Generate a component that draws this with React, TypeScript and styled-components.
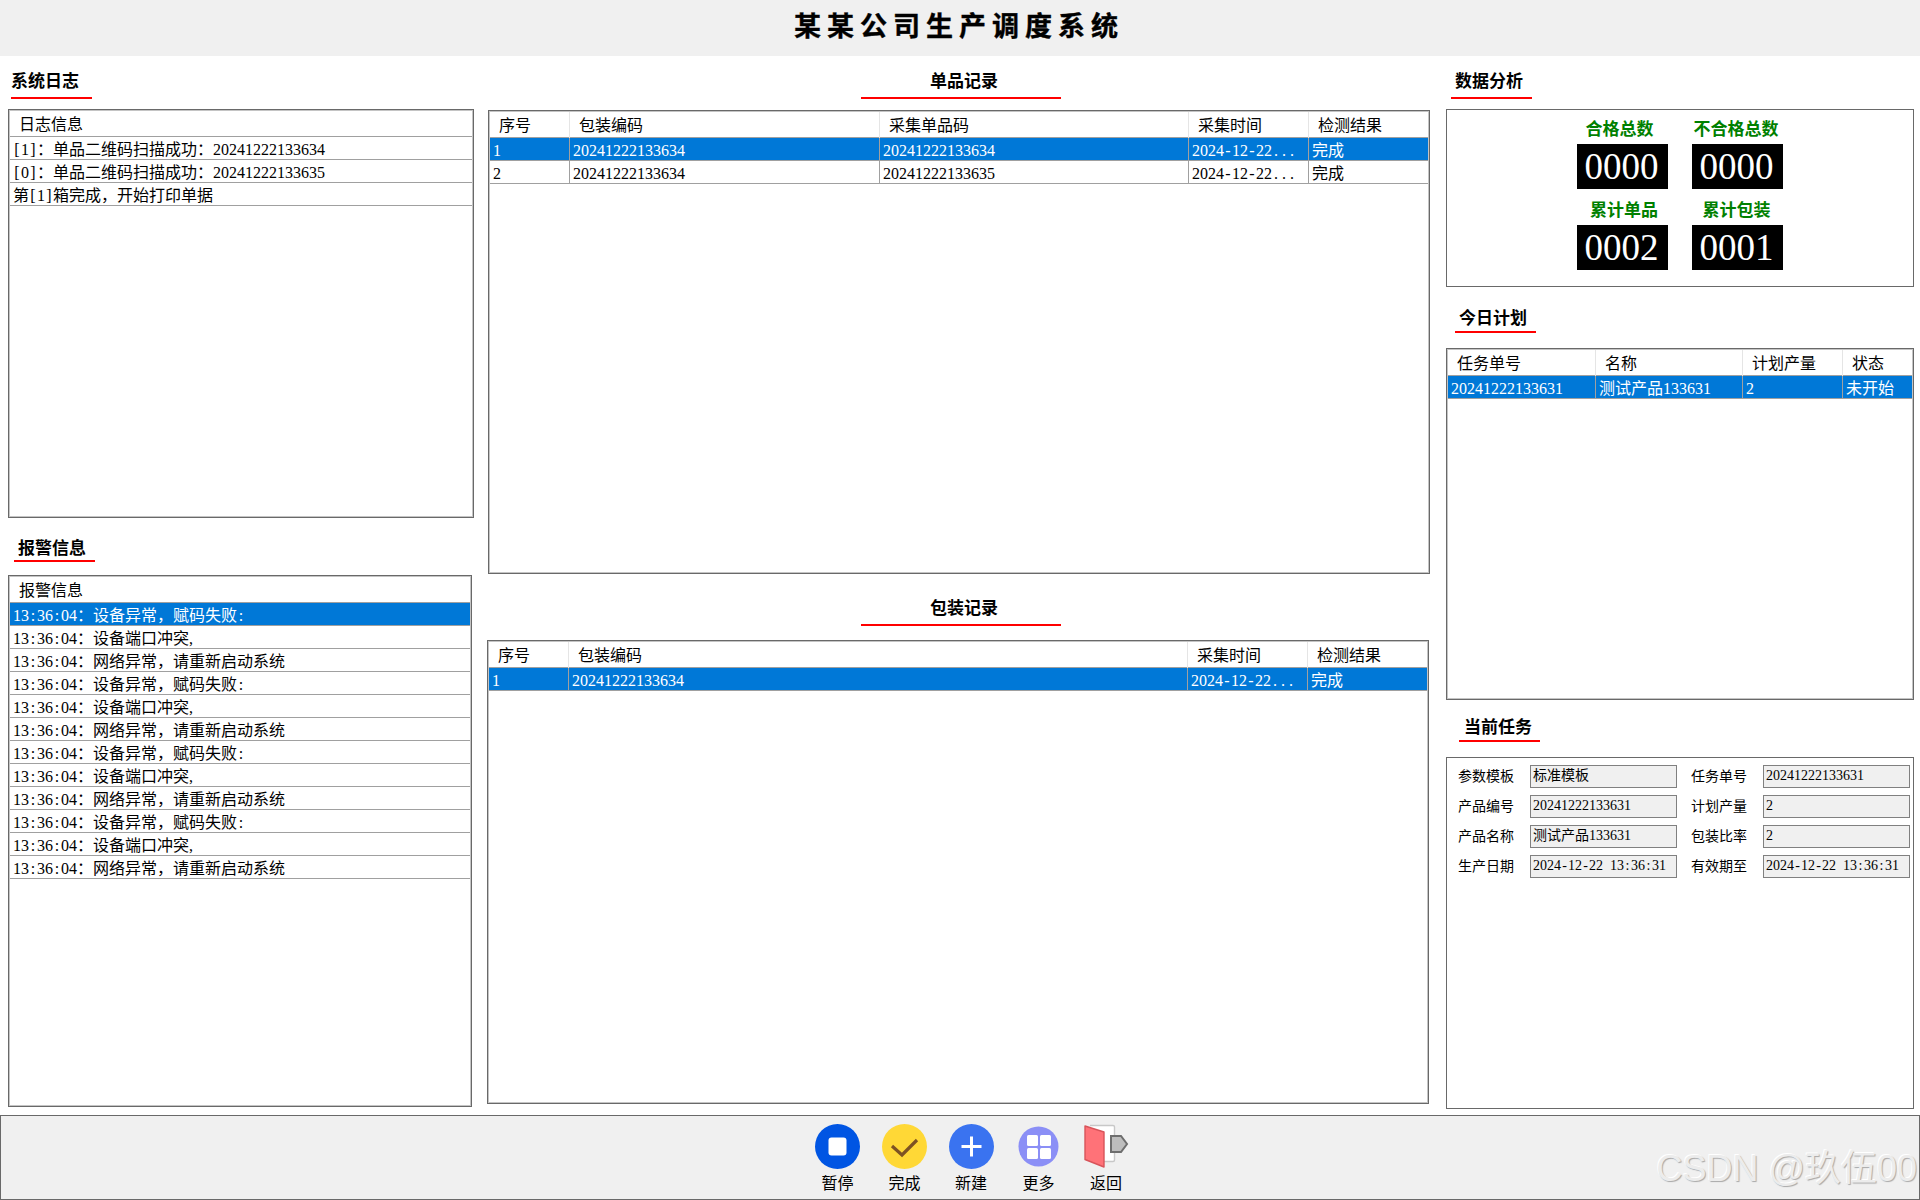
import React from "react";
import { createGlobalStyle, styled } from "styled-components";

const SONG = `"Liberation Serif", "Noto Sans CJK SC", serif`;

const GlobalStyle = createGlobalStyle`
  html, body {
    margin: 0;
    padding: 0;
    background: #fff;
  }
  body {
    font-family: ${SONG};
    font-size: 16px;
    color: #000;
  }
  * {
    box-sizing: border-box;
  }
`;

// half-width punctuation, the serif font has them narrower than the picture
const Half = styled.span`
  display: inline-block;
  width: 0.5em;
  text-align: center;
`;

const fixed = (text: string) =>
  text.split(/([:\[\]\-. ])/).map((part, i) =>
    i % 2 ? <Half key={i}>{part}</Half> : part
  );

const Page = styled.div`
  width: 1920px;
  height: 1200px;
  display: flex;
  flex-direction: column;
  overflow: hidden;
`;

const TopBar = styled.header`
  height: 56px;
  flex: none;
  background: #f0f0f0;
  display: flex;
  align-items: center;
  justify-content: center;
  padding: 0 2px 7px 0;
`;

const AppTitle = styled.h1`
  margin: 0;
  font-size: 27px;
  font-weight: 700;
  letter-spacing: 6px;
  font-family: "Noto Sans CJK SC", sans-serif;
  -webkit-text-stroke: 0.4px #000;
`;

const Main = styled.main`
  flex: 1;
  display: flex;
  padding: 0 6px 0 8px;
`;

const Column = styled.section<{ $w: number; $mx?: string }>`
  width: ${(p) => p.$w}px;
  flex: none;
  margin: ${(p) => p.$mx || "0"};
  display: flex;
  flex-direction: column;
`;

const Head = styled.div<{ $h: number; $below: number; $x?: number }>`
  height: ${(p) => p.$h}px;
  flex: none;
  display: flex;
  align-items: flex-end;
  padding-bottom: ${(p) => p.$below}px;
  padding-left: ${(p) => p.$x || 0}px;
`;

const HeadLabel = styled.div<{ $w?: number; $pad?: number; $lift?: number; $center?: boolean }>`
  width: ${(p) => p.$w || 81}px;
  padding-left: ${(p) => p.$pad || 0}px;
  padding-bottom: ${(p) => p.$lift ?? 5}px;
  text-align: ${(p) => (p.$center ? "center" : "left")};
  line-height: 24px;
  font-size: 17px;
  font-weight: 700;
  white-space: nowrap;
  border-bottom: 2px solid #f00;
  font-family: "Noto Sans CJK SC", sans-serif;
`;

const Panel = styled.div<{ $h: number; $mr?: number; $ml?: number }>`
  height: ${(p) => p.$h}px;
  flex: none;
  margin-left: ${(p) => p.$ml || 0}px;
  margin-right: ${(p) => p.$mr || 0}px;
  border: 1px solid #696969;
  padding: 1px;
  background: #fff;
`;

const GridPanel = styled(Panel)`
  box-shadow: inset 0 0 0 1px #c4c4c4;
`;

const HeaderRow = styled.div<{ $cols: string }>`
  display: grid;
  grid-template-columns: ${(p) => p.$cols};
  height: 26px;
  border-bottom: 1px solid #a0a0a0;
  background: #fff;
`;

const HeaderCell = styled.div`
  padding-left: 9px;
  line-height: 27px;
  white-space: nowrap;
  border-right: 1px solid #e5e5e5;
  &:last-child {
    border-right: none;
  }
`;

const Row = styled.div<{ $cols: string; $active?: boolean }>`
  display: grid;
  grid-template-columns: ${(p) => p.$cols};
  height: 23px;
  border-bottom: 1px solid #a0a0a0;
  background: ${(p) => (p.$active ? "#0078d7" : "#fff")};
  color: ${(p) => (p.$active ? "#fff" : "#000")};
`;

const Cell = styled.div`
  padding-left: 3px;
  line-height: 25px;
  white-space: nowrap;
  overflow: hidden;
  border-right: 1px solid #a0a0a0;
  &:last-child {
    border-right: none;
  }
`;

const BareCell = styled(Cell)`
  border-right: none;
`;

interface DataGridProps {
  cols: string;
  headers: string[];
  rows: string[][];
  activeRow?: number;
}

const DataGrid: React.FC<DataGridProps> = (props) => {
  return (
    <>
      <HeaderRow $cols={props.cols}>
        {props.headers.map((h) => (
          <HeaderCell key={h}>{h}</HeaderCell>
        ))}
      </HeaderRow>
      {props.rows.map((row, i) => (
        <Row key={i} $cols={props.cols} $active={i === props.activeRow}>
          {row.map((c, j) =>
            row.length === 1 ? (
              <BareCell key={j}>{fixed(c)}</BareCell>
            ) : (
              <Cell key={j}>{fixed(c)}</Cell>
            )
          )}
        </Row>
      ))}
    </>
  );
};

const StatGrid = styled.div`
  display: grid;
  grid-template-columns: 91px 91px;
  justify-content: center;
  column-gap: 24px;
  row-gap: 8px;
  padding-top: 5px;
`;

const StatLabel = styled.div<{ $shift?: number }>`
  height: 24px;
  line-height: 24px;
  margin-bottom: 4px;
  font-size: 17px;
  font-weight: 700;
  color: #008000;
  text-align: center;
  white-space: nowrap;
  font-family: "Noto Sans CJK SC", sans-serif;
  padding-left: ${(p) => Math.max(p.$shift || 0, 0)}px;
  padding-right: ${(p) => Math.max(-(p.$shift || 0), 0)}px;
`;

const StatValue = styled.div`
  height: 45px;
  background: #000;
  color: #fff;
  font-family: "Liberation Serif", serif;
  font-size: 37px;
  line-height: 45px;
  text-align: center;
  padding-right: 2px;
`;

const FormGrid = styled.div`
  display: grid;
  grid-template-columns: 219px 219px;
  column-gap: 14px;
  row-gap: 7px;
  padding: 6px 0 0 10px;
`;

const Field = styled.div`
  display: grid;
  grid-template-columns: 72px 147px;
  font-size: 14px;
`;

const FieldLabel = styled.div`
  height: 23px;
  line-height: 24px;
  white-space: nowrap;
`;

const FieldValue = styled.div`
  height: 23px;
  border: 1px solid #808080;
  background: #f0f0f0;
  padding-left: 2px;
  line-height: 19px;
  white-space: nowrap;
  overflow: hidden;
`;

const BottomBar = styled.footer`
  position: relative;
  height: 85px;
  flex: none;
  background: #f0f0f0;
  border: 1px solid #696969;
  display: flex;
  justify-content: center;
  padding: 8px 0 0 23px;
`;

const ToolButton = styled.button<{ $w: number }>`
  width: ${(p) => p.$w}px;
  padding: 0;
  border: none;
  background: none;
  font-family: ${SONG};
  font-size: 16px;
  color: #000;
  display: flex;
  flex-direction: column;
  align-items: center;
  justify-content: flex-start;
  gap: 5px;
`;

const ToolIcon = styled.svg`
  display: block;
  flex: none;
  width: 45px;
  height: 45px;
`;

const ToolText = styled.span`
  line-height: 20px;
`;

const Watermark = styled.div`
  position: absolute;
  right: 2px;
  bottom: 8px;
  font-family: "Liberation Sans", "Noto Sans CJK SC", sans-serif;
  font-size: 36px;
  line-height: 44px;
  white-space: nowrap;
  color: #ececec;
  text-shadow: 1px 1px 1px #a8a8a8, -1px -1px 0 #fff;
`;

const StopIcon = () => (
  <ToolIcon viewBox="0 0 45 45">
    <circle cx="22.5" cy="22.5" r="22.5" fill="#0055e3" />
    <rect x="13.5" y="13.5" width="18" height="18" rx="3" fill="#fff" />
  </ToolIcon>
);

const DoneIcon = () => (
  <ToolIcon viewBox="0 0 45 45">
    <circle cx="22.5" cy="22.5" r="22.5" fill="#ffd836" />
    <path d="M10 22 L20 31 L35 16" fill="none" stroke="#7d5223" strokeWidth="3.2" />
  </ToolIcon>
);

const NewIcon = () => (
  <ToolIcon viewBox="0 0 45 45">
    <circle cx="22.5" cy="22.5" r="22.5" fill="#3a73f0" />
    <path d="M12.5 22.5 H32.5 M22.5 12.5 V32.5" stroke="#fff" strokeWidth="3" />
  </ToolIcon>
);

const MoreIcon = () => (
  <ToolIcon viewBox="0 0 45 45">
    <circle cx="22.5" cy="22.5" r="20" fill="#8b8ff6" />
    <rect x="11" y="11" width="11" height="11" rx="1.5" fill="#fff" />
    <rect x="24" y="11" width="11" height="11" rx="1.5" fill="#fff" />
    <rect x="11" y="24" width="11" height="11" rx="1.5" fill="#fff" />
    <rect x="24" y="24" width="11" height="11" rx="1.5" fill="#fff" />
  </ToolIcon>
);

const BackIcon = () => (
  <ToolIcon viewBox="0 0 45 45">
    <path d="M6 1.5 H29 Q30.5 1.5 30.5 3 V36 Q30.5 37.5 29 37.5 H20" fill="#fff" stroke="#c8c8c8" strokeWidth="1.4" />
    <path d="M1 2 L20 8 V43 L1 35.5 Z" fill="#ff7278" stroke="#d8545a" strokeWidth="1.4" strokeLinejoin="round" />
    <path d="M27 12 H37 L43 20 L37 28 H27 Z" fill="#bdbdbd" stroke="#6e6e6e" strokeWidth="2" />
  </ToolIcon>
);

const logRows = [
  ["[1]：单品二维码扫描成功：20241222133634"],
  ["[0]：单品二维码扫描成功：20241222133635"],
  ["第[1]箱完成，开始打印单据"],
];

const alarmTexts = [
  "设备异常，赋码失败:",
  "设备端口冲突,",
  "网络异常，请重新启动系统",
];
const alarmRows = Array.from({ length: 12 }, (_, i) => [
  `13:36:04：${alarmTexts[i % 3]}`,
]);

const itemRows = [
  ["1", "20241222133634", "20241222133634", "2024-12-22...", "完成"],
  ["2", "20241222133634", "20241222133635", "2024-12-22...", "完成"],
];

const packRows = [["1", "20241222133634", "2024-12-22...", "完成"]];

const planRows = [["20241222133631", "测试产品133631", "2", "未开始"]];

const stats = [
  { label: "合格总数", value: "0000", shift: -6 },
  { label: "不合格总数", value: "0000", shift: -3 },
  { label: "累计单品", value: "0002", shift: 3 },
  { label: "累计包装", value: "0001", shift: -2 },
];

const fields = [
  ["参数模板", "标准模板"],
  ["任务单号", "20241222133631"],
  ["产品编号", "20241222133631"],
  ["计划产量", "2"],
  ["产品名称", "测试产品133631"],
  ["包装比率", "2"],
  ["生产日期", "2024-12-22 13:36:31"],
  ["有效期至", "2024-12-22 13:36:31"],
];

const tools = [
  { label: "暂停", icon: <StopIcon />, w: 67 },
  { label: "完成", icon: <DoneIcon />, w: 67 },
  { label: "新建", icon: <NewIcon />, w: 66 },
  { label: "更多", icon: <MoreIcon />, w: 69 },
  { label: "返回", icon: <BackIcon />, w: 66 },
];

const App: React.FC = () => {
  return (
    <Page>
      <GlobalStyle />
      <TopBar>
        <AppTitle>某某公司生产调度系统</AppTitle>
      </TopBar>

      <Main>
        <Column $w={466}>
          <Head $h={53} $below={10} $x={3}>
            <HeadLabel>系统日志</HeadLabel>
          </Head>
          <GridPanel $h={409}>
            <DataGrid cols="1fr" headers={["日志信息"]} rows={logRows} />
          </GridPanel>
          <Head $h={57} $below={13} $x={6}>
            <HeadLabel $pad={4} $lift={1}>报警信息</HeadLabel>
          </Head>
          <GridPanel $h={532} $mr={2}>
            <DataGrid cols="1fr" headers={["报警信息"]} rows={alarmRows} activeRow={0} />
          </GridPanel>
        </Column>

        <Column $w={942} $mx="0 16px 0 14px">
          <Head $h={54} $below={11} $x={373}>
            <HeadLabel $w={200} $pad={6} $center>单品记录</HeadLabel>
          </Head>
          <GridPanel $h={464}>
            <DataGrid
              cols="80px 310px 309px 120px 119px"
              headers={["序号", "包装编码", "采集单品码", "采集时间", "检测结果"]}
              rows={itemRows}
              activeRow={0}
            />
          </GridPanel>
          <Head $h={66} $below={14} $x={373}>
            <HeadLabel $w={200} $pad={6} $center>包装记录</HeadLabel>
          </Head>
          <GridPanel $h={464} $ml={-1} $mr={1}>
            <DataGrid
              cols="80px 619px 120px 119px"
              headers={["序号", "包装编码", "采集时间", "检测结果"]}
              rows={packRows}
              activeRow={0}
            />
          </GridPanel>
        </Column>

        <Column $w={468}>
          <Head $h={53} $below={10} $x={5}>
            <HeadLabel $pad={4}>数据分析</HeadLabel>
          </Head>
          <Panel $h={178}>
            <StatGrid>
              {stats.map((s) => (
                <div key={s.label}>
                  <StatLabel $shift={s.shift}>{s.label}</StatLabel>
                  <StatValue>{s.value}</StatValue>
                </div>
              ))}
            </StatGrid>
          </Panel>
          <Head $h={61} $below={15} $x={9}>
            <HeadLabel $pad={4} $lift={2}>今日计划</HeadLabel>
          </Head>
          <GridPanel $h={352}>
            <DataGrid
              cols="148px 147px 100px 69px"
              headers={["任务单号", "名称", "计划产量", "状态"]}
              rows={planRows}
              activeRow={0}
            />
          </GridPanel>
          <Head $h={57} $below={15} $x={13}>
            <HeadLabel $pad={5} $lift={2}>当前任务</HeadLabel>
          </Head>
          <Panel $h={352}>
            <FormGrid>
              {fields.map(([label, value]) => (
                <Field key={label}>
                  <FieldLabel>{label}</FieldLabel>
                  <FieldValue>{fixed(value)}</FieldValue>
                </Field>
              ))}
            </FormGrid>
          </Panel>
        </Column>
      </Main>

      <BottomBar>
        {tools.map((t) => (
          <ToolButton key={t.label} $w={t.w}>
            {t.icon}
            <ToolText>{t.label}</ToolText>
          </ToolButton>
        ))}
        <Watermark>CSDN @玖伍00</Watermark>
      </BottomBar>
    </Page>
  );
};

export default App;
